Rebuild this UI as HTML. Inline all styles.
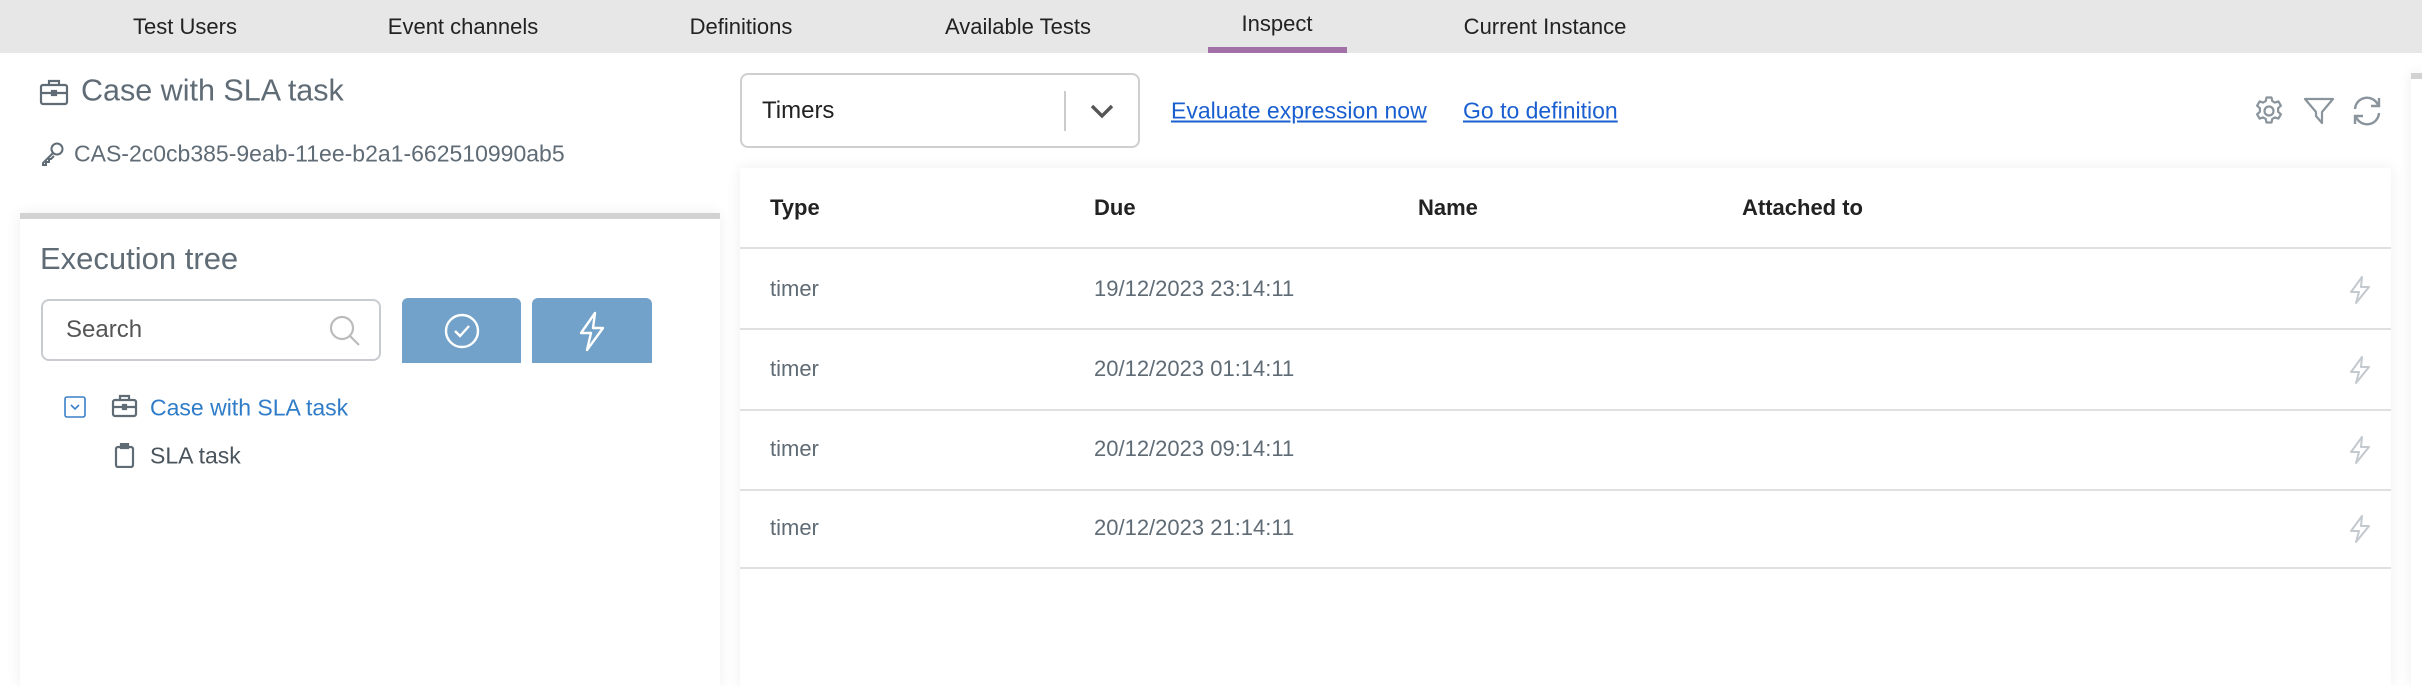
<!DOCTYPE html>
<html style="width:2422px;height:686px;overflow:hidden"><head><meta charset="utf-8"><style>
*{margin:0;padding:0;box-sizing:border-box}
body{width:2422px;height:686px;overflow:hidden;background:#fff;font-family:"Liberation Sans",Arial,sans-serif;position:relative}
.a{position:absolute;white-space:nowrap}
.tab{position:absolute;top:0;height:53px;line-height:53px;font-size:22px;color:#222;transform:translateX(-50%)}
.vc{transform:translateY(-50%)}
.hdr{font-weight:bold;font-size:22px;color:#222}
.cell{font-size:22px;color:#5f6b75}
.line{position:absolute;left:740px;width:1651px;height:2px;background:#e0e0e0}
</style></head><body>
<div class="a" style="left:0;top:0;width:2422px;height:53px;background:#e7e7e7"></div>
<div class="tab" style="left:185px">Test Users</div>
<div class="tab" style="left:463px">Event channels</div>
<div class="tab" style="left:741px">Definitions</div>
<div class="tab" style="left:1018px">Available Tests</div>
<div class="tab" style="left:1277px;top:-3px">Inspect</div>
<div class="tab" style="left:1545px">Current Instance</div>
<div class="a" style="left:1208px;top:47px;width:139px;height:6px;background:#a070a6"></div>

<svg class="a" style="left:39px;top:78px" width="30" height="28" viewBox="0 0 30 28" fill="none" stroke="#5f6b75" stroke-width="2.2"><rect x="2" y="7" width="26" height="19" rx="2"/><path d="M10 7V3h10v4M2 15h26"/><rect x="13" y="13" width="4" height="4" fill="#5f6b75"/></svg>
<div class="a vc" style="left:81px;top:91px;font-size:30.5px;color:#5f6b75">Case with SLA task</div>
<svg class="a" style="left:40px;top:141px" width="26" height="26" viewBox="0 0 26 26" fill="none" stroke="#5f6b75" stroke-width="2"><circle cx="17" cy="8" r="5.5"/><path d="M13 12L3 22v2h3v-3h3v-3h2l3-3"/></svg>
<div class="a vc" style="left:74px;top:154px;font-size:23px;color:#5f6b75">CAS-2c0cb385-9eab-11ee-b2a1-662510990ab5</div>

<div class="a" style="left:20px;top:213px;width:700px;height:473px;background:#fff;box-shadow:0 0 14px rgba(0,0,0,0.07)"></div>
<div class="a" style="left:20px;top:213px;width:700px;height:6px;background:#d2d2d2"></div>
<div class="a vc" style="left:40px;top:259px;font-size:31px;color:#5f6b75">Execution tree</div>
<div class="a" style="left:41px;top:299px;width:340px;height:62px;border:2px solid #c8ccd0;border-radius:8px"></div>
<div class="a vc" style="left:66px;top:330px;font-size:24px;color:#555">Search</div>
<svg class="a" style="left:328px;top:314px" width="34" height="34" viewBox="0 0 34 34" fill="none" stroke="#bbb" stroke-width="2.2"><circle cx="14" cy="14" r="11"/><path d="M22 22l9 9"/></svg>
<div class="a" style="left:402px;top:298px;width:119px;height:65px;background:#72a2c9;border-radius:6px 6px 0 0"></div>
<svg class="a" style="left:443px;top:312px" width="38" height="38" viewBox="0 0 38 38" fill="none" stroke="#fff" stroke-width="2.4"><circle cx="19" cy="19" r="16"/><path d="M12 19l5 5 9-10"/></svg>
<div class="a" style="left:532px;top:298px;width:120px;height:65px;background:#72a2c9;border-radius:6px 6px 0 0"></div>
<svg class="a" style="left:577px;top:310px" width="30" height="42" viewBox="0 0 30 42" fill="none" stroke="#fff" stroke-width="2.4" stroke-linejoin="round"><path d="M18 3L4 23h10l-4 17 16-22H16z"/></svg>

<svg class="a" style="left:64px;top:396px" width="23" height="23" viewBox="0 0 23 23" fill="none" stroke="#3a80c8" stroke-width="1.6"><rect x="1" y="1" width="20" height="20" rx="2"/><path d="M7 9l4 4 4-4"/></svg>
<svg class="a" style="left:111px;top:394px" width="27" height="24" viewBox="0 0 27 24" fill="none" stroke="#5f6b75" stroke-width="2.2"><rect x="2" y="6" width="23" height="16" rx="2"/><path d="M9 6V2h9v4M2 13h23"/><rect x="12" y="11" width="3" height="4" fill="#5f6b75"/></svg>
<div class="a vc" style="left:150px;top:408px;font-size:23px;color:#2f7cc8">Case with SLA task</div>
<svg class="a" style="left:114px;top:443px" width="22" height="25" viewBox="0 0 22 25" fill="none" stroke="#5f6b75" stroke-width="2.2"><rect x="2" y="4" width="17" height="20" rx="2"/><rect x="7" y="1" width="7" height="4" fill="#5f6b75"/></svg>
<div class="a vc" style="left:150px;top:456px;font-size:23px;color:#4a545c">SLA task</div>

<div class="a" style="left:740px;top:73px;width:400px;height:75px;border:2px solid #cfcfcf;border-radius:8px"></div>
<div class="a vc" style="left:762px;top:111px;font-size:24px;color:#222">Timers</div>
<div class="a" style="left:1064px;top:91px;width:2px;height:40px;background:#ccc"></div>
<svg class="a" style="left:1089px;top:103px" width="26" height="16" viewBox="0 0 26 16" fill="none" stroke="#555" stroke-width="3.4"><path d="M3 3l10 10 10-10"/></svg>
<div class="a vc" style="left:1171px;top:111px;font-size:23px;color:#1a5fd0;text-decoration:underline">Evaluate expression now</div>
<div class="a vc" style="left:1463px;top:111px;font-size:23px;color:#1a5fd0;text-decoration:underline">Go to definition</div>

<svg class="a" style="left:2253px;top:95px" width="32" height="32" viewBox="0 0 32 32" fill="none" stroke="#8a949c" stroke-width="2.2" stroke-linejoin="round"><circle cx="16" cy="16" r="4.5"/><path d="M13.5 2.5h5l.8 3.6 2.6 1.5 3.5-1.2 2.5 4.3-2.8 2.5v3.6l2.8 2.5-2.5 4.3-3.5-1.2-2.6 1.5-.8 3.6h-5l-.8-3.6-2.6-1.5-3.5 1.2-2.5-4.3 2.8-2.5v-3.6l-2.8-2.5 2.5-4.3 3.5 1.2 2.6-1.5z"/></svg>
<svg class="a" style="left:2303px;top:97px" width="32" height="28" viewBox="0 0 32 28" fill="none" stroke="#8a949c" stroke-width="2.2" stroke-linejoin="round"><path d="M2 2h28L19 15v11l-6-7v-4z"/></svg>
<svg class="a" style="left:2351px;top:96px" width="32" height="30" viewBox="0 0 32 30" fill="none" stroke="#8a949c" stroke-width="2.4"><path d="M4 13A12 12 0 0 1 27 9M28 17A12 12 0 0 1 5 21"/><path d="M28 2v8h-8M4 28v-8h8"/></svg>

<div class="a" style="left:740px;top:168px;width:1651px;height:518px;background:#fff;box-shadow:0 0 14px rgba(0,0,0,0.07)"></div>
<div class="a hdr vc" style="left:770px;top:208px">Type</div>
<div class="a hdr vc" style="left:1094px;top:208px">Due</div>
<div class="a hdr vc" style="left:1418px;top:208px">Name</div>
<div class="a hdr vc" style="left:1742px;top:208px">Attached to</div>
<div class="line" style="top:247px"></div>
<div class="line" style="top:328px"></div>
<div class="line" style="top:409px"></div>
<div class="line" style="top:489px"></div>
<div class="line" style="top:567px"></div>
<div class="a cell vc" style="left:770px;top:289px">timer</div><div class="a cell vc" style="left:1094px;top:289px">19/12/2023 23:14:11</div>
<div class="a cell vc" style="left:770px;top:369px">timer</div><div class="a cell vc" style="left:1094px;top:369px">20/12/2023 01:14:11</div>
<div class="a cell vc" style="left:770px;top:449px">timer</div><div class="a cell vc" style="left:1094px;top:449px">20/12/2023 09:14:11</div>
<div class="a cell vc" style="left:770px;top:528px">timer</div><div class="a cell vc" style="left:1094px;top:528px">20/12/2023 21:14:11</div>
<svg class="a" style="left:2348px;top:275px" width="24" height="30" viewBox="0 0 24 30" fill="none" stroke="#c3c9ce" stroke-width="2" stroke-linejoin="round"><path d="M14 2L3 17h8l-3 11 13-16h-8z"/></svg>
<svg class="a" style="left:2348px;top:355px" width="24" height="30" viewBox="0 0 24 30" fill="none" stroke="#c3c9ce" stroke-width="2" stroke-linejoin="round"><path d="M14 2L3 17h8l-3 11 13-16h-8z"/></svg>
<svg class="a" style="left:2348px;top:435px" width="24" height="30" viewBox="0 0 24 30" fill="none" stroke="#c3c9ce" stroke-width="2" stroke-linejoin="round"><path d="M14 2L3 17h8l-3 11 13-16h-8z"/></svg>
<svg class="a" style="left:2348px;top:514px" width="24" height="30" viewBox="0 0 24 30" fill="none" stroke="#c3c9ce" stroke-width="2" stroke-linejoin="round"><path d="M14 2L3 17h8l-3 11 13-16h-8z"/></svg>

<div class="a" style="left:2411px;top:73px;width:11px;height:613px;background:#fff;box-shadow:0 0 14px rgba(0,0,0,0.08)"></div>
<div class="a" style="left:2411px;top:73px;width:11px;height:6px;background:#d2d2d2"></div>
</body></html>
